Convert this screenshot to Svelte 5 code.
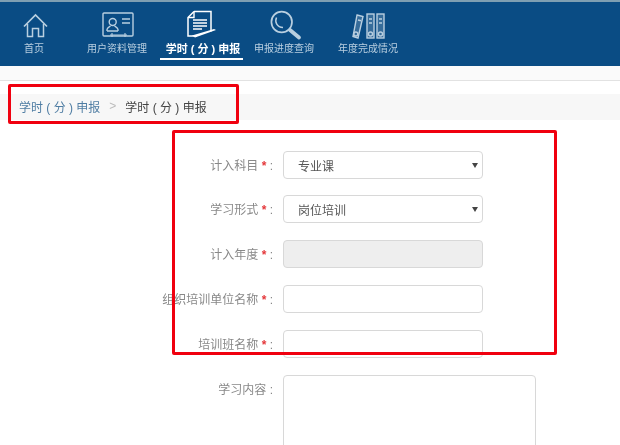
<script>
	const navItems = [
		{ label: '首页', icon: 'home' },
		{ label: '用户资料管理', icon: 'card' },
		{ label: '学时 ( 分 ) 申报', icon: 'doc', active: true },
		{ label: '申报进度查询', icon: 'search' },
		{ label: '年度完成情况', icon: 'binders' }
	];
</script>

{#snippet icon(name)}
	<svg viewBox="0 0 40 32" width="40" height="32" fill="none" stroke="currentColor" stroke-width="1.4">
		{#if name === 'home'}
			<path d="M10 16.500 21.500 5 33 16.500" stroke-width="1.700" />
			<path d="M13.500 14v12.500h5V18.500h6v8h5V14" stroke-width="1.500" />
		{:else if name === 'card'}
			<rect x="6" y="3" width="30" height="23" rx="1" />
			<circle cx="15.700" cy="12" r="3.500" />
			<path d="M10 21v-1.500c0-1.500 2-2.500 3.500-3.500M21 21v-1.500c0-1.500-2-2.500-3.500-3.500M10 21h11" />
			<path d="M25 9h8M25 13h8" />
			<path d="M13 25h17M15 23v4M28 23v4" stroke-width="1.100" />
		{:else if name === 'doc'}
			<path d="M11 1.500h17v20M11 1.500l-6 6V26h9" stroke-width="1.500" />
			<path d="M5 7.500h6v-6" />
			<path d="M10 10h14M10 13h14M10 16h14M10 19h9" stroke-width="1.800" opacity="0.75" />
			<path d="m9 25.500 22-6.500 2 1-21 7.500z" fill="currentColor" stroke="none" />
		{:else if name === 'search'}
			<circle cx="17.700" cy="12" r="10.300" stroke-width="1.700" />
			<path d="M12.500 7.500c-2 4.500 .5 10 6.500 10" stroke-width="1.500" />
			<path d="m26 20 9 7.500" stroke-width="3.800" stroke-linecap="round" />
		{:else}
			<path class="binder" d="m9 5 6 1.500L10 28l-5-1.500z" />
			<rect class="binder" x="19" y="4" width="7" height="24" />
			<rect class="binder" x="29" y="4" width="7" height="24" />
			<path d="m10 10 3 .8M21 9h3M21 13h3M31 9h3M31 13h3" />
			<circle cx="7.800" cy="24" r="2" />
			<circle cx="22.500" cy="24" r="2" />
			<circle cx="32.500" cy="24" r="2" />
		{/if}
	</svg>
{/snippet}

<div class="page">
	<nav class="topnav">
		{#each navItems as item}
			<a class="nav-item {item.icon}" class:active={item.active} href="#top">
				{@render icon(item.icon)}
				<span>{item.label}</span>
			</a>
		{/each}
	</nav>

	<div class="breadcrumb">
		<a href="#top">学时 ( 分 ) 申报</a>
		<span class="sep">&gt;</span>
		<span class="current">学时 ( 分 ) 申报</span>
	</div>

	<form class="form">
		<label class="row">
			<span class="label">计入科目 <b>*</b> :</span>
			<div class="control select"><span>专业课</span><i></i></div>
		</label>
		<label class="row">
			<span class="label">学习形式 <b>*</b> :</span>
			<div class="control select"><span>岗位培训</span><i></i></div>
		</label>
		<label class="row">
			<span class="label">计入年度 <b>*</b> :</span>
			<div class="control disabled"></div>
		</label>
		<label class="row">
			<span class="label">组织培训单位名称 <b>*</b> :</span>
			<div class="control"></div>
		</label>
		<label class="row">
			<span class="label">培训班名称 <b>*</b> :</span>
			<div class="control"></div>
		</label>
		<label class="row">
			<span class="label">学习内容 :</span>
			<div class="control area"></div>
		</label>
	</form>

	<div class="mark mark-crumb"></div>
	<div class="mark mark-form"></div>
</div>

<style>
	:global(body) {
		margin: 0;
		background: #fff;
	}

	.page {
		position: relative;
		width: 620px;
		height: 445px;
		overflow: hidden;
		font-family: "Liberation Sans", "Noto Sans CJK SC", sans-serif;
		font-size: 12px;
		color: #555;
		background: #fff;
		filter: blur(0.45px);
	}

	.topnav {
		display: flex;
		height: 64px;
		border-top: 2px solid #7f9fb2;
		background: #0a4c84;
		padding-left: 7px;
		border-bottom: 14px solid #fafafa;
		box-shadow: 0 1px 0 #e2e2e2;
	}

	.nav-item {
		display: flex;
		flex-direction: column;
		align-items: center;
		box-sizing: border-box;
		height: 60px;
		padding-top: 8px;
		color: #b9cfe0;
		text-decoration: none;
		font-size: 10px;
		line-height: 14px;
	}

	.nav-item svg {
		flex: none;
	}

	.nav-item span {
		white-space: nowrap;
	}

	.home { width: 54px; }
	.card { width: 86px; margin-left: 13px; }
	.doc { width: 83px; padding-left: 3px; }
	.search { width: 70px; margin-left: 6px; }
	.binders { width: 80px; margin-left: 9px; }

	.nav-item.active {
		height: 58px;
		color: #fff;
		font-size: 11px;
		font-weight: bold;
		border-bottom: 2px solid #fff;
	}

	.breadcrumb {
		box-sizing: border-box;
		display: flex;
		align-items: center;
		gap: 9px;
		height: 26px;
		margin-top: 14px;
		padding: 0 0 2px 19px;
		background: #f7f7f7;
		font-size: 12px;
	}

	.breadcrumb a {
		color: #4f7da3;
		text-decoration: none;
	}

	.breadcrumb .sep {
		color: #bbb;
	}

	.breadcrumb .current {
		color: #444;
	}

	.form {
		display: flex;
		flex-direction: column;
		gap: 16.800px;
		margin-top: 30.600px;
	}

	.row {
		display: flex;
		align-items: flex-start;
		gap: 10px;
	}

	.label {
		width: 273px;
		height: 28px;
		line-height: 30px;
		text-align: right;
		color: #888;
		white-space: nowrap;
	}

	.label b {
		color: #e4393c;
		font-weight: bold;
	}

	.control {
		position: relative;
		box-sizing: border-box;
		display: flex;
		align-items: center;
		width: 200px;
		height: 28px;
		padding-left: 14px;
		border: 1px solid #d8d8d8;
		border-radius: 4px;
		background: #fff;
		color: #555;
	}

	.control span {
		padding-top: 1px;
	}

	.control.disabled {
		background: #eee;
	}

	.control.area {
		width: 253px;
		height: 120px;
	}

	.select i {
		position: absolute;
		right: 4px;
		top: 11px;
		border: 3px solid transparent;
		border-top: 5px solid #444;
		border-bottom: 0;
	}

	.binder {
		fill: rgba(255, 255, 255, 0.18);
	}

	.mark {
		position: absolute;
		box-sizing: border-box;
		border: 3px solid #f0000f;
		border-radius: 2px;
		pointer-events: none;
	}

	.mark-crumb {
		left: 8px;
		top: 84px;
		width: 231px;
		height: 40px;
	}

	.mark-form {
		left: 172px;
		top: 130px;
		width: 385px;
		height: 225px;
	}
</style>
